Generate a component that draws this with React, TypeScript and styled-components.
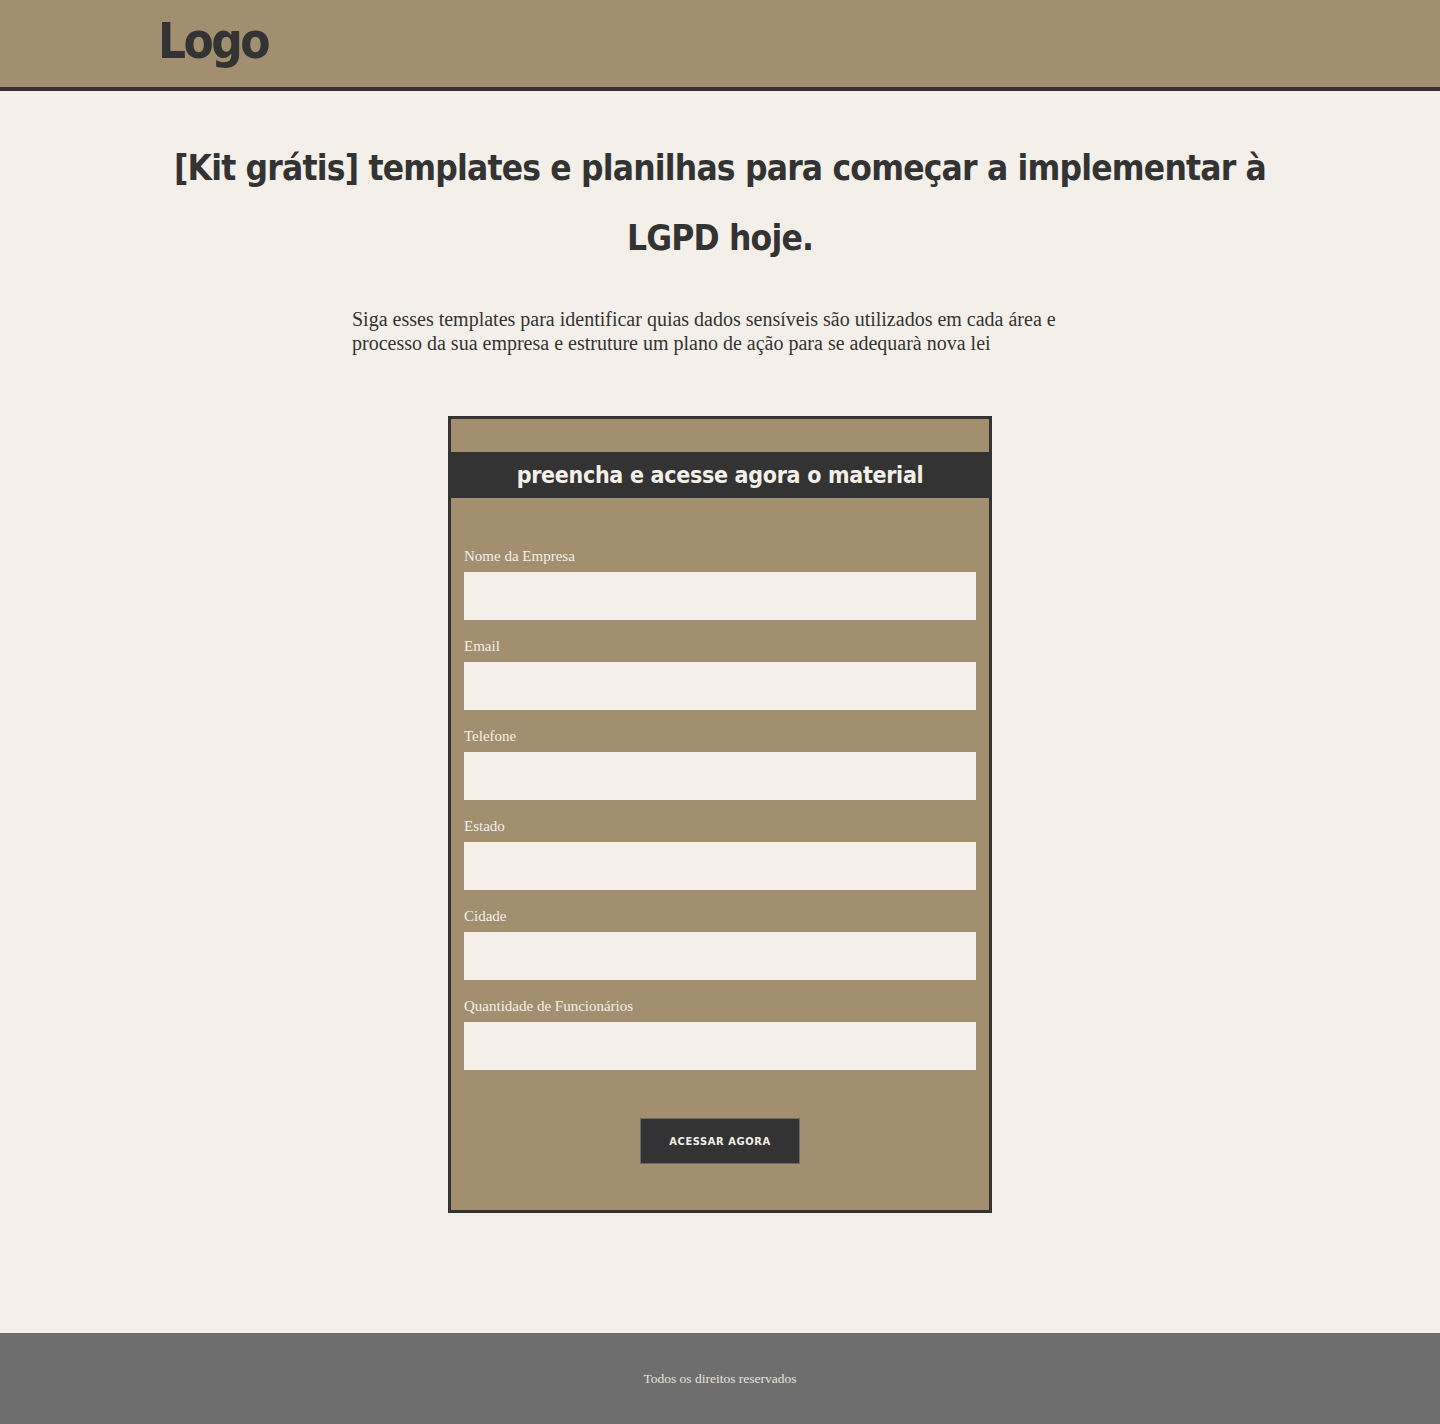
import React from "react";
import styled, { createGlobalStyle } from "styled-components";

const Global = createGlobalStyle`
  html, body { margin: 0; padding: 0; }
  body { background: #f4f0e9; color: #333333; }
  * { box-sizing: border-box; }
`;

const condensed = `"DejaVu Sans Condensed", "Liberation Sans Narrow", "Roboto Condensed", "Liberation Sans", sans-serif`;
const serif = `"Liberation Serif", "DejaVu Serif", serif`;

const Page = styled.div`
  display: flex;
  flex-direction: column;
  min-height: 1424px;
`;

const Header = styled.header`
  background: #a18f70;
  border-bottom: 4px solid #333333;
  height: 91px;
  display: flex;
  align-items: center;
  padding-left: 158px;
`;

const Logo = styled.div`
  font-family: ${condensed};
  font-stretch: condensed;
  font-weight: 700;
  font-size: 49px;
  line-height: 1;
  color: #333333;
  letter-spacing: -2.6px;
  margin-top: -4px;
`;

const Main = styled.main`
  flex: 1;
  display: flex;
  flex-direction: column;
  align-items: center;
  padding: 42px 0 120px;
`;

const Title = styled.h1`
  margin: 0;
  max-width: 1120px;
  text-align: center;
  font-family: ${condensed};
  font-stretch: condensed;
  font-weight: 700;
  font-size: 35px;
  letter-spacing: -0.8px;
  line-height: 70px;
  color: #333333;
`;

const Lead = styled.p`
  margin: 34px 0 0;
  width: 736px;
  font-family: ${serif};
  font-size: 20px;
  line-height: 24px;
  color: #333333;
`;

const FormBox = styled.form`
  margin-top: 61px;
  width: 544px;
  border: 3px solid #333333;
  background: #a18f70;
  padding: 33px 0 46px;
  display: flex;
  flex-direction: column;
`;

const FormHead = styled.h2`
  margin: 0;
  height: 46px;
  background: #333333;
  color: #f4f0e9;
  font-family: ${condensed};
  font-stretch: condensed;
  font-weight: 700;
  font-size: 23px;
  letter-spacing: -0.3px;
  line-height: 46px;
  text-align: center;
`;

const Fields = styled.div`
  padding: 50px 13px 0;
  display: flex;
  flex-direction: column;
  gap: 18px;
`;

const Field = styled.label`
  display: flex;
  flex-direction: column;
`;

const LabelText = styled.span`
  font-family: ${serif};
  font-size: 15px;
  line-height: 20px;
  padding-bottom: 6px;
  margin-top: -2px;
  color: #f4f0e9;
`;

const Input = styled.input`
  height: 48px;
  border: none;
  background: #f4f0e9;
  outline: none;
  padding: 0 12px;
`;

const ButtonRow = styled.div`
  display: flex;
  justify-content: center;
  margin-top: 48px;
`;

const Button = styled.button`
  width: 160px;
  height: 46px;
  background: #333333;
  border: 1px solid #6a6a6a;
  color: #f4f0e9;
  font-family: ${condensed};
  font-stretch: condensed;
  font-weight: 700;
  font-size: 11px;
  letter-spacing: 0.6px;
  text-transform: uppercase;
  cursor: pointer;
`;

const Footer = styled.footer`
  height: 92px;
  background: #6e6e6e;
  display: flex;
  align-items: center;
  justify-content: center;
  font-family: ${serif};
  font-size: 13.5px;
  color: #e6e2da;
`;

const fields = [
  "Nome da Empresa",
  "Email",
  "Telefone",
  "Estado",
  "Cidade",
  "Quantidade de Funcionários",
];

export default function App() {
  return (
    <Page>
      <Global />
      <Header>
        <Logo>Logo</Logo>
      </Header>
      <Main>
        <Title>
          [Kit grátis] templates e planilhas para começar a implementar à LGPD hoje.
        </Title>
        <Lead>
          Siga esses templates para identificar quias dados sensíveis são utilizados em cada área e
          processo da sua empresa e estruture um plano de ação para se adequarà nova lei
        </Lead>
        <FormBox onSubmit={(e) => e.preventDefault()}>
          <FormHead>preencha e acesse agora o material</FormHead>
          <Fields>
            {fields.map((f) => (
              <Field key={f}>
                <LabelText>{f}</LabelText>
                <Input type="text" />
              </Field>
            ))}
          </Fields>
          <ButtonRow>
            <Button type="submit">Acessar agora</Button>
          </ButtonRow>
        </FormBox>
      </Main>
      <Footer>Todos os direitos reservados</Footer>
    </Page>
  );
}
